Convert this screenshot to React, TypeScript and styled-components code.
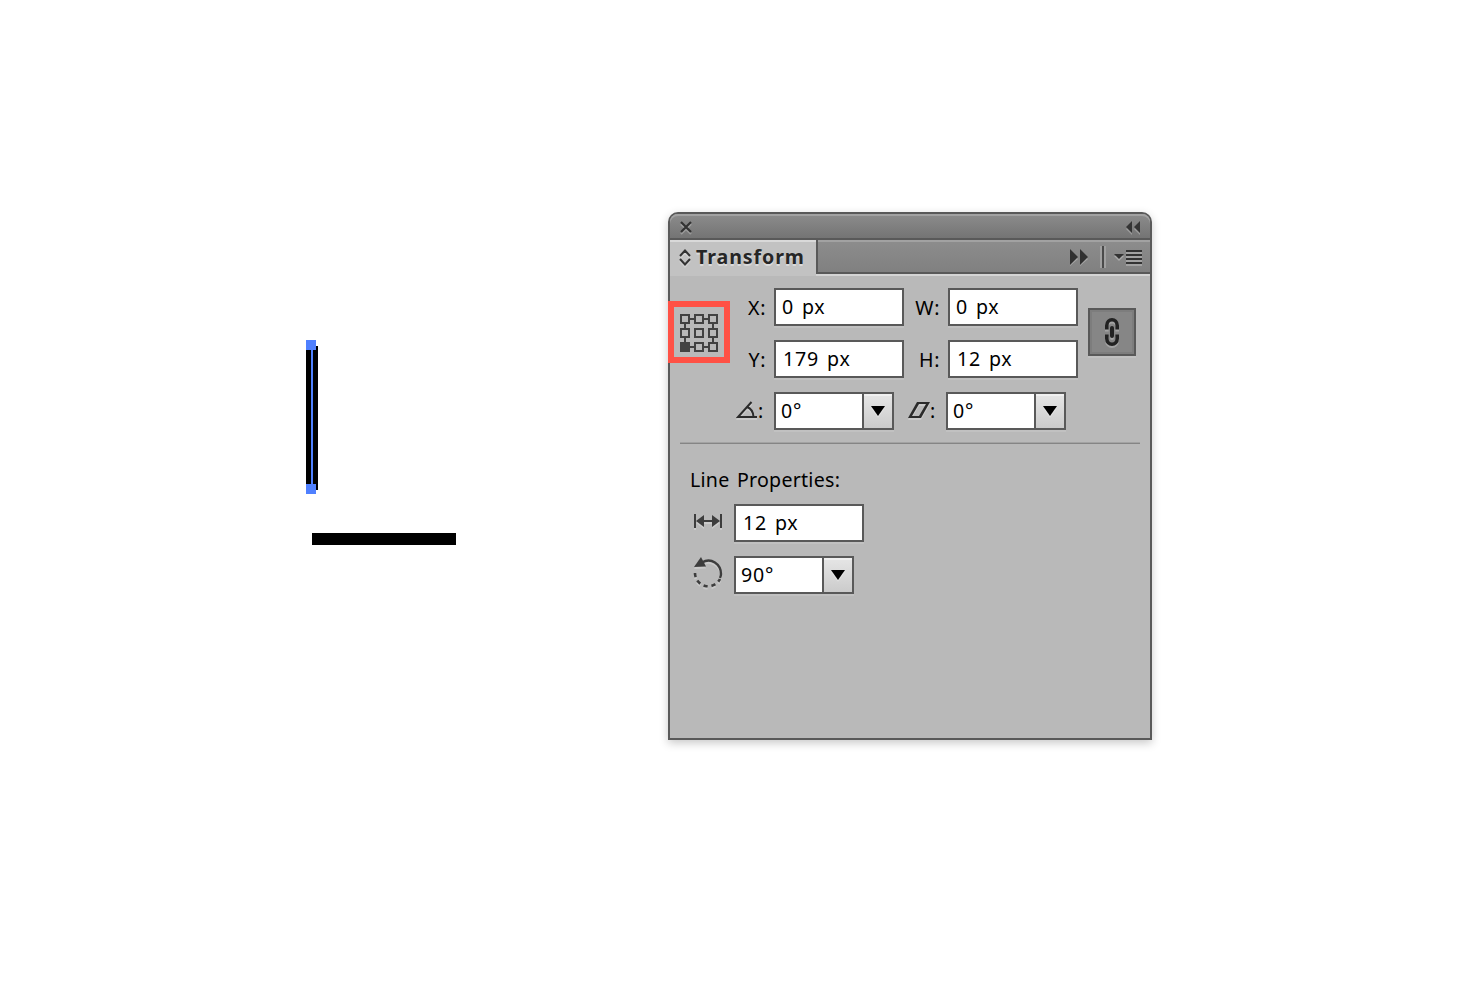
import React from 'react';
import styled, { createGlobalStyle } from 'styled-components';

const Global = createGlobalStyle`
  * { box-sizing: border-box; }
  body { margin: 0; background: #fff; overflow: hidden; }
`;

const INK = '#3d3d3d';
const EDGE = '#595959';

const Page = styled.main`
  position: relative;
  display: flex;
  width: 1476px;
  height: 984px;
  padding: 212px 0 0 668px;
  background: #fff;
  color: #000;
  font: 19.6px/34px 'Noto Sans', sans-serif;
  letter-spacing: 0.8px;
  word-spacing: 2px;
`;

const Artboard = styled.svg`
  position: absolute;
  left: 300px;
  top: 336px;
`;

const Panel = styled.section`
  display: flex;
  flex-direction: column;
  width: 484px;
  height: 528px;
  border: 2px solid ${EDGE};
  border-radius: 10px 10px 0 0;
  background: #b9b9b9;
  box-shadow: 0 3px 10px rgba(0, 0, 0, 0.22);
`;

const TitleBar = styled.header`
  display: flex;
  justify-content: space-between;
  align-items: flex-start;
  height: 26px;
  padding: 7px 10px 0 10px;
  border-bottom: 2px solid ${EDGE};
  border-radius: 8px 8px 0 0;
  background: linear-gradient(#8c8c8c, #747474);
  box-shadow: inset 0 2px 0 #a2a2a2;
`;

const TabBar = styled.div`
  display: flex;
  height: 36px;
`;

const Tab = styled.div`
  display: flex;
  align-items: center;
  gap: 5px;
  width: 146px;
  height: 36px;
  padding: 0 0 2px 9px;
  background: #c2c2c2;
  box-shadow: inset 0 2px 0 #d9d9d9;
`;

const TabTitle = styled.span`
  color: #262626;
  font-weight: bold;
  font-size: 19.6px;
  letter-spacing: 0.9px;
  text-shadow: 0 2px 0 #dadada;
`;

const TabTools = styled.div`
  display: flex;
  flex: 1;
  justify-content: flex-end;
  height: 34px;
  padding: 6px 8px 0 0;
  border-left: 2px solid ${EDGE};
  border-bottom: 2px solid ${EDGE};
  background: linear-gradient(#8d8d8d, #808080);
  box-shadow: inset 0 2px 0 #a2a2a2, 0 2px 0 #d4d4d4;
`;

const Settings = styled.div`
  display: flex;
  height: 168px;
  margin: 0 10px;
  padding-top: 12px;
  border-bottom: 1px solid #858585;
  box-shadow: inset 0 -1px 0 #a3a3a3;
`;

const AnchorFrame = styled.div`
  display: flex;
  justify-content: center;
  width: 62px;
  height: 62px;
  margin: 13px 0 0 -12px;
  padding-top: 7px;
  border: 6px solid #ff5145;
`;

const Fields = styled.div`
  display: flex;
  flex-direction: column;
  gap: 14px;
  width: 348px;
`;

const Row = styled.div`
  display: flex;
  height: 38px;
`;

const Label = styled.label`
  width: 44px;
  padding: 3px 8px 0 0;
  text-align: right;
  white-space: nowrap;
  letter-spacing: 0.6px;
`;

const IconLabel = styled.label<{ $width: number; $inset: number }>`
  display: flex;
  width: ${p => p.$width}px;
  padding: 2px 0 0 ${p => p.$inset}px;
`;

const Input = styled.div<{ $inset?: number }>`
  width: 130px;
  height: 38px;
  padding-left: ${p => p.$inset ?? 6}px;
  border: 2px solid ${EDGE};
  background: #fff;
  box-shadow: 0 2px 0 #c1c1c1;
  white-space: nowrap;
`;

const Combo = styled.div`
  display: flex;
  width: 120px;
  height: 38px;
  border: 2px solid ${EDGE};
  background: #fff;
  box-shadow: 0 2px 0 #c1c1c1;
`;

const ComboValue = styled.span`
  width: 86px;
  padding-left: 5px;
`;

const ComboButton = styled.span`
  display: grid;
  place-items: center;
  width: 30px;
  border-left: 2px solid ${EDGE};
  background: linear-gradient(#e6e6e6, #cbcbcb);
  box-shadow: inset 0 2px 0 #f0f0f0;
`;

const LinkButton = styled.div`
  display: grid;
  place-items: center;
  width: 48px;
  height: 48px;
  margin: 20px 0 0 10px;
  border: 2px solid ${EDGE};
  background: #868686;
  box-shadow: inset 0 0 0 2px #7d7d7d, 0 2px 0 #c1c1c1;
`;

const LineProperties = styled.div`
  display: flex;
  flex-direction: column;
  gap: 14px;
  padding: 19px 0 0 20px;
`;

const Heading = styled.div`
  height: 27px;
  line-height: 34px;
  letter-spacing: 0.26px;
`;

const IconCell = styled.span`
  display: flex;
  width: 44px;
  height: 38px;
`;

const Engraved = styled.svg`
  display: block;
  flex: none;
  filter: drop-shadow(0 2px 0 rgba(255, 255, 255, 0.25));
`;

function Dropdown({ value }: { value: string }) {
  return (
    <Combo>
      <ComboValue>{value}</ComboValue>
      <ComboButton>
        <Engraved width="14" height="10"><path d="M0 0H14L7 10Z" fill="#000" /></Engraved>
      </ComboButton>
    </Combo>
  );
}

function AnchorGrid() {
  const stops = [1, 15, 29];
  return (
    <svg width="38" height="38" fill="none" stroke="#424242" strokeWidth="2">
      <path d="M10 5H14M24 5H28M10 33H14M24 33H28M5 10V14M5 24V28M33 10V14M33 24V28" />
      {stops.flatMap(y => stops.map(x => (
        <rect key={`${x}-${y}`} x={x} y={y} width="8" height="8" fill={x === 1 && y === 29 ? '#424242' : 'none'} />
      )))}
    </svg>
  );
}

function PanelTools() {
  return (
    <svg width="74" height="24">
      <path d="M2 6L10 13L2 20ZM12 6L20 13L12 20Z" fill="#a6a6a6" />
      <path d="M2 3L10 11L2 19ZM12 3L20 11L12 19Z" fill="#303030" />
      <path d="M33 0V22M37 0V22" stroke="#a0a0a0" strokeWidth="2" />
      <path d="M35 0V22" stroke="#4a4a4a" strokeWidth="2" />
      <path d="M58 7H74M58 11H74M58 15H74M58 19H74" stroke="#a3a3a3" strokeWidth="2" />
      <path d="M58 5H74M58 9H74M58 13H74M58 17H74" stroke="#333" strokeWidth="2" />
      <path d="M46 10H56L51 15Z" fill="#aaa" />
      <path d="M46 8H56L51 13Z" fill="#333" />
    </svg>
  );
}

export default function App() {
  return (
    <Page>
      <Global />
      <Artboard width="160" height="214">
        <path d="M6 10H18V154H6ZM12 197H156V209H12Z" fill="#000" />
        <path d="M11 10H13V154H11ZM6 4H16V14H6ZM6 148H16V158H6Z" fill="#4f80ff" shapeRendering="crispEdges" />
      </Artboard>

      <Panel>
        <TitleBar>
          <Engraved width="12" height="12"><path d="M1 1L11 11M11 1L1 11" stroke="#333" strokeWidth="2.2" /></Engraved>
          <Engraved width="14" height="12"><path d="M6 0V12L0 6ZM14 0V12L8 6Z" fill="#343434" /></Engraved>
        </TitleBar>
        <TabBar>
          <Tab>
            <Engraved width="12" height="18"><path d="M1 8L6 2.5L11 8M1 11L6 16.5L11 11" fill="none" stroke="#333" strokeWidth="2" /></Engraved>
            <TabTitle>Transform</TabTitle>
          </Tab>
          <TabTools><PanelTools /></TabTools>
        </TabBar>

        <Settings>
          <AnchorFrame><AnchorGrid /></AnchorFrame>
          <Fields>
            <Row>
              <Label>X:</Label><Input>0 px</Input>
              <Label>W:</Label><Input>0 px</Input>
            </Row>
            <Row>
              <Label>Y:</Label><Input $inset={7}>179 px</Input>
              <Label>H:</Label><Input $inset={7}>12 px</Input>
            </Row>
            <Row>
              <IconLabel $width={44} $inset={6}>
                <Engraved width="22" height="26"><path d="M21 23H2L15.5 8M11 13Q17 15 17.5 23" fill="none" stroke="#2b2b2b" strokeWidth="2" /></Engraved>:
              </IconLabel>
              <Dropdown value="0°" />
              <IconLabel $width={52} $inset={14}>
                <Engraved width="22" height="26">
                  <path fillRule="evenodd" d="M0 24L9 8H22L13 24ZM4 22H11L18 10H11Z" fill="#2b2b2b" />
                </Engraved>:
              </IconLabel>
              <Dropdown value="0°" />
            </Row>
          </Fields>
          <LinkButton>
            <Engraved width="16" height="30" fill="none" stroke="#222" strokeWidth="3.6">
              <path d="M2.8 12.5V8.5C2.8 0.8 13.2 0.8 13.2 8.5V12.5M2.8 17.5V21.5C2.8 29.2 13.2 29.2 13.2 21.5V17.5" />
              <path d="M8 11V19" strokeLinecap="round" strokeWidth="4" />
            </Engraved>
          </LinkButton>
        </Settings>

        <LineProperties>
          <Heading>Line Properties:</Heading>
          <Row>
            <IconCell>
              <Engraved width="34" height="30">
                <path d="M5 10V24M31 10V24M10 17H26" stroke={INK} strokeWidth="2" />
                <path d="M6 17L14 11V23ZM30 17L22 11V23Z" fill={INK} />
              </Engraved>
            </IconCell>
            <Input $inset={7}>12 px</Input>
          </Row>
          <Row>
            <IconCell>
              <Engraved width="34" height="34">
                <path d="M12 6.5C21 1 31 8 31 18Q31 20 30 22" fill="none" stroke={INK} strokeWidth="2.4" />
                <path d="M4 11L11 1L16 10.5Z" fill={INK} />
                <path d="M5 17A13.2 13.2 0 0 0 30 23" fill="none" stroke={INK} strokeWidth="2.6" strokeDasharray="4.2 3.8" />
              </Engraved>
            </IconCell>
            <Dropdown value="90°" />
          </Row>
        </LineProperties>
      </Panel>
    </Page>
  );
}
